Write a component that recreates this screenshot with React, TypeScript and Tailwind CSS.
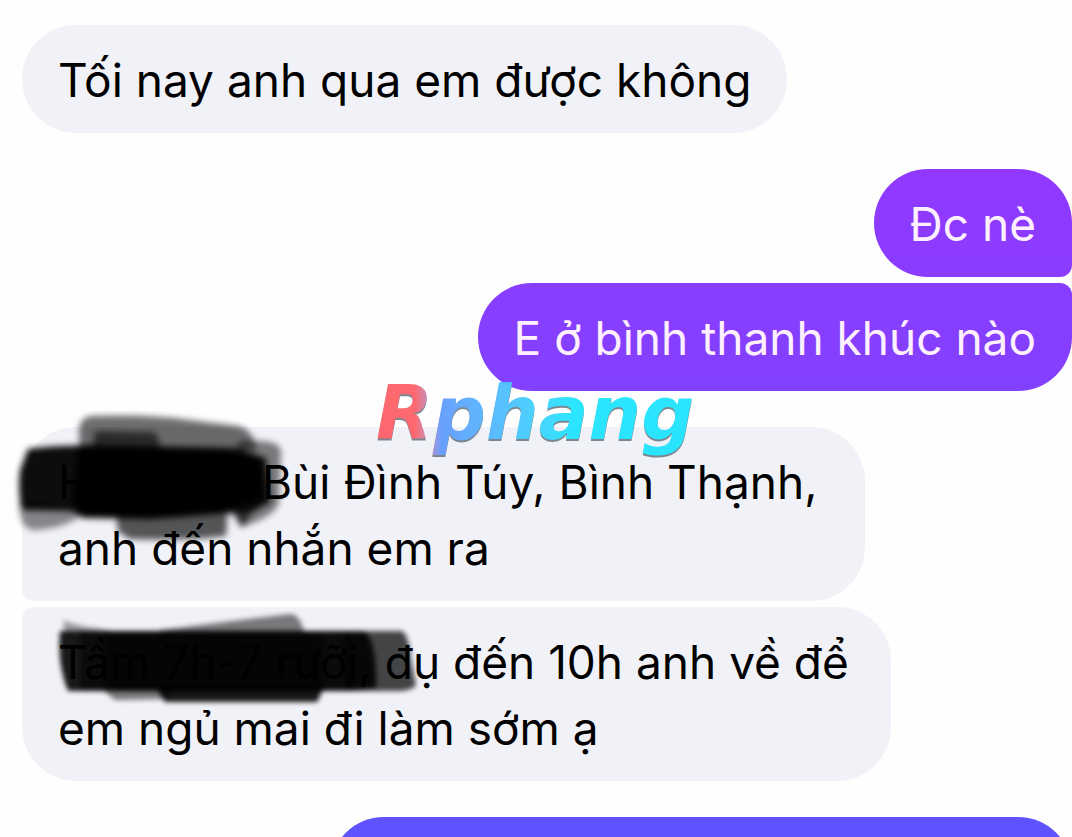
import type { ReactNode } from "react";

function Bubble({ className, children }: { className: string; children?: ReactNode }) {
  return (
    <div className={`relative min-h-[108px] px-9 pt-[22px] pb-5 text-[46px] leading-[66px] whitespace-nowrap ${className}`}>
      {children}
    </div>
  );
}

function AddressScribble() {
  return (
    <svg
      aria-hidden="true"
      className="absolute -left-3 -top-[17px] h-[140px] w-[290px]"
      viewBox="10 410 290 140"
    >
      <defs>
        <filter id="soft-a" x="-10%" y="-20%" width="120%" height="140%">
          <feGaussianBlur stdDeviation="3" />
        </filter>
      </defs>
      <g filter="url(#soft-a)">
        <path d="M90 416 Q150 414 190 420 L238 426 Q254 430 256 450 L80 454 L79 430 Q80 418 90 416Z" fill="#000" opacity=".57" />
        <path d="M95 431 L152 432 Q160 434 160 450 L92 453Z" fill="#000" opacity=".6" />
        <path d="M238 442 Q278 437 281 451 L279 502 Q276 516 242 527 L228 510 Z" fill="#000" opacity=".5" />
        <path d="M19 500 L88 508 Q76 526 38 530 Q18 532 19 500Z" fill="#000" opacity=".45" />
        <path d="M116 510 L228 508 L226 536 Q190 541 130 539 L118 532Z" fill="#000" opacity=".65" />
        <path d="M235 510 L254 510 L241 528Z" fill="#000" opacity=".65" />
        <path d="M28 449 Q46 446 90 445 L235 448 L266 458 L270 502 L254 511 L180 517 L150 519 L83 518 L72 511 L24 510 Q17 500 20 470Z" fill="#000" opacity=".95" />
        <path d="M78 448 L222 449 L258 460 L262 497 L220 513 L150 518 L82 517 L72 501Z" fill="#000" />
      </g>
    </svg>
  );
}

function TimeScribble() {
  return (
    <svg
      aria-hidden="true"
      className="absolute left-[28px] top-[3px] h-[100px] w-[380px]"
      viewBox="50 610 380 100"
    >
      <defs>
        <filter id="soft-b" x="-10%" y="-20%" width="120%" height="140%">
          <feGaussianBlur stdDeviation="2.5" />
        </filter>
      </defs>
      <g filter="url(#soft-b)">
        <path d="M160 630 L240 620 L290 614 Q300 614 304 632 L160 634Z" fill="#000" opacity=".5" />
        <path d="M63 620 Q80 627 112 630 L65 634Z" fill="#000" opacity=".35" />
        <path d="M100 688 L170 688 L170 699 L115 700Z" fill="#000" opacity=".5" />
        <path d="M155 686 L325 686 L317 702 L165 702Z" fill="#000" opacity=".9" />
        <path d="M345 631 L402 631 Q409 635 411 660 L416 685 Q412 691 395 691 L345 691Z" fill="#000" opacity=".72" />
        <path d="M60 631 L364 631 Q377 640 376 688 L350 691 L68 691 Q57 665 60 631Z" fill="#000" opacity=".9" />
        <path d="M80 631 L350 631 L352 691 L80 691Z" fill="#000" opacity=".55" />
        <path d="M104 631 L322 631 L324 691 L104 691Z" fill="#000" opacity=".55" />
      </g>
    </svg>
  );
}

const incoming = "bg-[#f1f2f7] text-black";
const outgoing = "text-[#fff0ff]";

export default function App() {
  return (
    <main
      className="relative flex h-screen flex-col gap-9 overflow-hidden bg-[#fefefe] pt-[25px] font-['Inter','Noto_Sans',sans-serif]"
    >
      <section className="flex shrink-0 flex-col items-start pl-[22px]">
        <Bubble className={`rounded-[54px] ${incoming}`}>Tối nay anh qua em được không</Bubble>
      </section>

      <section className="flex shrink-0 flex-col items-end gap-1.5">
        <Bubble className={`rounded-[54px] rounded-br-xl bg-linear-to-b from-[#9138ff] to-[#8a3cff] ${outgoing}`}>
          Đc nè
        </Bubble>
        <Bubble className={`rounded-[54px] rounded-tr-xl bg-linear-to-b from-[#883dff] to-[#8340ff] ${outgoing}`}>
          E ở bình thanh khúc nào
        </Bubble>
      </section>

      <section className="flex shrink-0 flex-col items-start gap-1.5 pl-[22px]">
        <Bubble className={`rounded-[54px] rounded-bl-xl pr-12 ${incoming}`}>
          <div className="flex">
            <span className="w-[204px]">H</span>
            <span>Bùi Đình Túy, Bình Thạnh,</span>
          </div>
          <div>anh đến nhắn em ra</div>
          <AddressScribble />
        </Bubble>
        <Bubble className={`rounded-[54px] rounded-tl-xl pr-[42px] ${incoming}`}>
          <div>Tầm 7h-7 rưỡi, đụ đến 10h anh về để</div>
          <div>em ngủ mai đi làm sớm ạ</div>
          <TimeScribble />
        </Bubble>
      </section>

      <section className="flex shrink-0 flex-col items-end">
        <Bubble className="w-[742px] max-w-full rounded-[54px] bg-[#5f52ff]" />
      </section>

      <div className="absolute left-[376px] top-[363px] bg-linear-to-r from-[#ff6068] from-12% via-[#619bff] via-20% to-[#20e4ff] to-60% bg-clip-text pr-2 font-['DejaVu_Sans',sans-serif] text-[74px] leading-[100px] font-bold text-transparent italic opacity-95 drop-shadow-[0_2px_0_#75818b]">
        Rphang
      </div>
    </main>
  );
}
